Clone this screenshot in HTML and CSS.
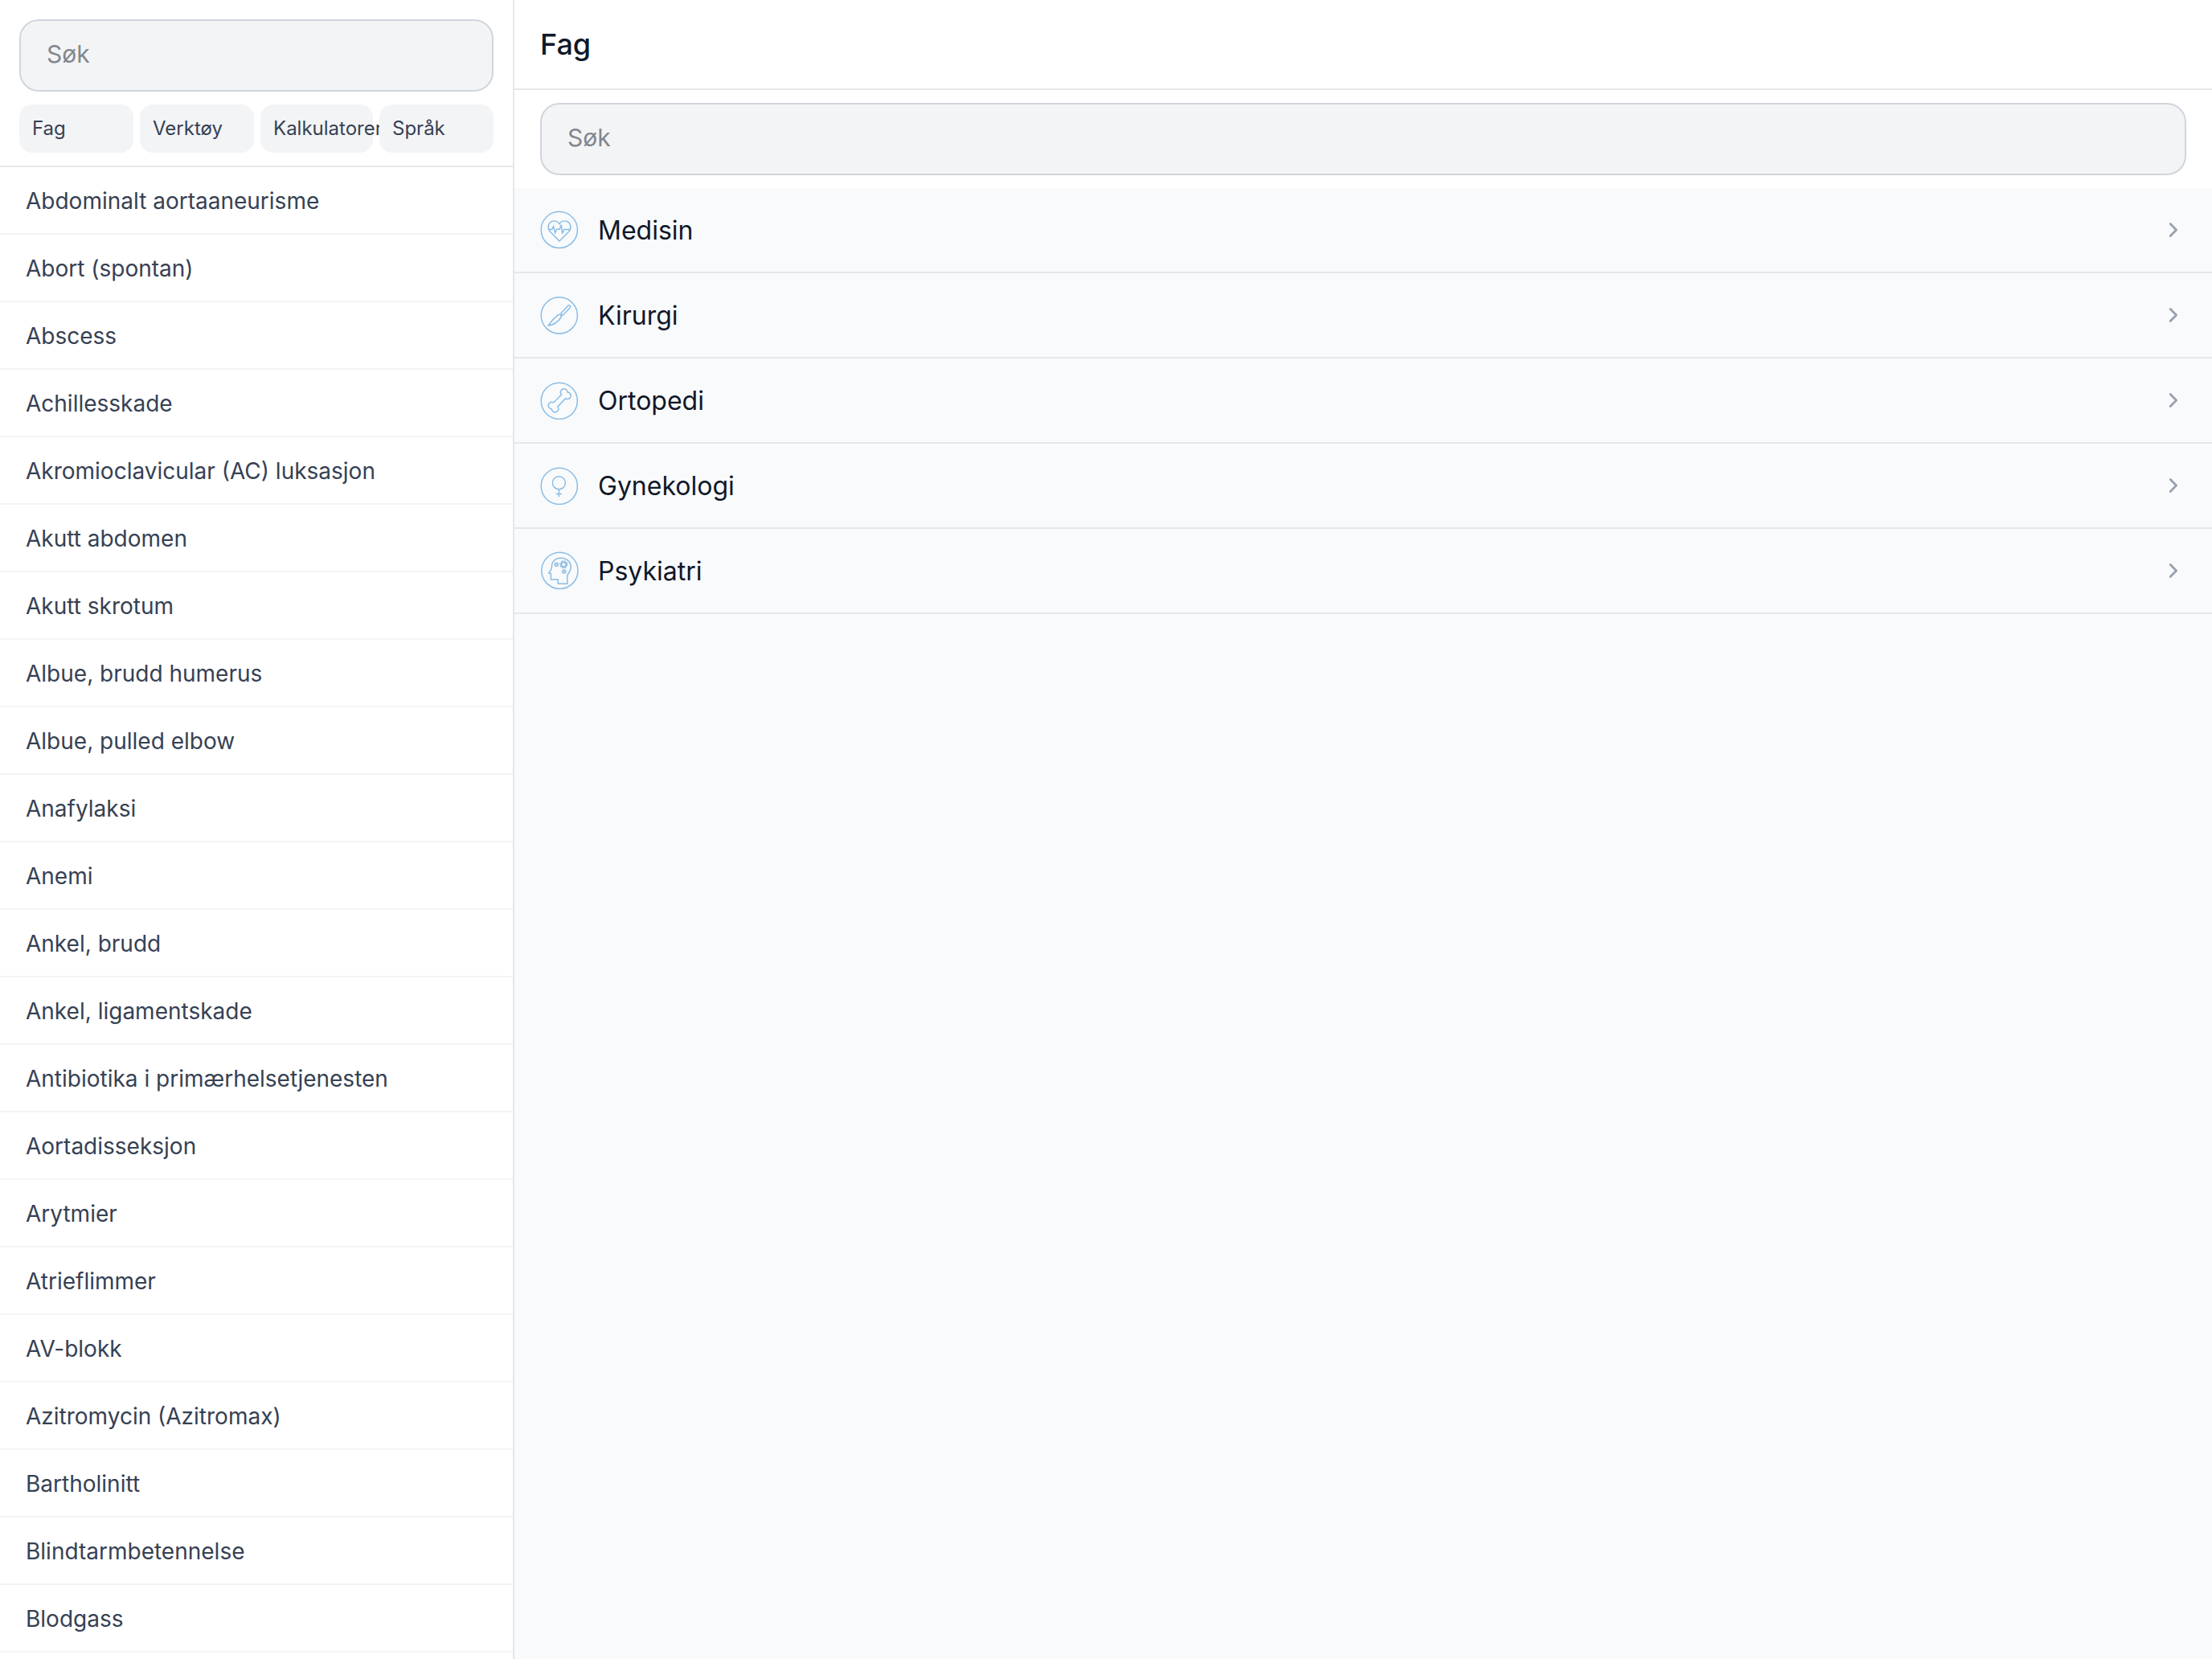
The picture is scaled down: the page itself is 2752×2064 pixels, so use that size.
FILE: index.html
```html
<!DOCTYPE html>
<html lang="no">
<head>
  <meta charset="UTF-8">
  <meta name="viewport" content="width=device-width, initial-scale=1.0">
  <title>Fag</title>
  <link rel="stylesheet" href="styles.css">
</head>
<body>
  <div class="app">
    <aside class="sidebar">
      <div class="sidebar-top">
        <input class="search" type="text" placeholder="Søk">
        <nav class="chips">
          <a class="chip">Fag</a>
          <a class="chip">Verktøy</a>
          <a class="chip">Kalkulatorer</a>
          <a class="chip">Språk</a>
        </nav>
      </div>
      <ul class="topics">
        <li>Abdominalt aortaaneurisme</li>
        <li>Abort (spontan)</li>
        <li>Abscess</li>
        <li>Achillesskade</li>
        <li>Akromioclavicular (AC) luksasjon</li>
        <li>Akutt abdomen</li>
        <li>Akutt skrotum</li>
        <li>Albue, brudd humerus</li>
        <li>Albue, pulled elbow</li>
        <li>Anafylaksi</li>
        <li>Anemi</li>
        <li>Ankel, brudd</li>
        <li>Ankel, ligamentskade</li>
        <li>Antibiotika i primærhelsetjenesten</li>
        <li>Aortadisseksjon</li>
        <li>Arytmier</li>
        <li>Atrieflimmer</li>
        <li>AV-blokk</li>
        <li>Azitromycin (Azitromax)</li>
        <li>Bartholinitt</li>
        <li>Blindtarmbetennelse</li>
        <li>Blodgass</li>
      </ul>
    </aside>

    <main class="content">
      <header class="content-header">
        <h1>Fag</h1>
      </header>
      <div class="content-search">
        <input class="search" type="text" placeholder="Søk">
      </div>
      <div class="subjects">
        <a class="subject">
          <svg class="icon" viewBox="0 0 48 48">
            <circle cx="23.8" cy="23.9" r="22.6"/>
            <path d="M24 38 L12.4 26.2 C8.6 22 9.9 15.7 13.8 13.8 C17.6 12.1 21.8 13.1 24 16.6 C26.2 13.1 30.4 12.1 34.2 13.8 C38.1 15.7 39.4 22 35.6 26.2 Z"/>
            <path d="M10.2 23.4 H14.8 L16.7 19.6 L18.7 27.7 L20.6 23.2 H24.2 L26.2 17.7 L27.7 28.6 L29.7 23.4 H37.8"/>
          </svg>
          <span>Medisin</span>
          <svg class="chevron" viewBox="0 0 12 20"><path d="M2.2 2.4 L9.6 10 L2.2 17.6"/></svg>
        </a>
        <a class="subject">
          <svg class="icon" viewBox="0 0 48 48">
            <circle cx="23.8" cy="24.4" r="22.6"/>
            <path d="M26 21.7 L34.6 12.4 Q35.8 11.2 37.1 12.3 Q38.4 13.5 37.3 14.8 L28.5 24 L26.2 23.6 Z"/>
            <path d="M10.2 36.9 C13.4 32 17.8 27.6 22.4 23.6 Q24 22.8 25.4 24 L26.6 26 C23.2 31.2 18.2 36.4 10.2 36.9 Z"/>
          </svg>
          <span>Kirurgi</span>
          <svg class="chevron" viewBox="0 0 12 20"><path d="M2.2 2.4 L9.6 10 L2.2 17.6"/></svg>
        </a>
        <a class="subject">
          <svg class="icon" viewBox="0 0 48 48">
            <circle cx="23.8" cy="24.8" r="22.6"/>
            <path d="M26.5 16.9 A4.3 4.3 0 1 1 34 13.9 A4.3 4.3 0 1 1 31.5 21.8 L21.9 31.9 A4.3 4.3 0 1 1 14.2 34.8 A4.3 4.3 0 1 1 16.8 26.9 Z"/>
          </svg>
          <span>Ortopedi</span>
          <svg class="chevron" viewBox="0 0 12 20"><path d="M2.2 2.4 L9.6 10 L2.2 17.6"/></svg>
        </a>
        <a class="subject">
          <svg class="icon" viewBox="0 0 48 48">
            <circle cx="23.8" cy="24.8" r="22.6"/>
            <circle cx="23.4" cy="20.7" r="8"/>
            <path d="M23.4 28.7 V38.2 M19.6 34.4 H27.2"/>
          </svg>
          <span>Gynekologi</span>
          <svg class="chevron" viewBox="0 0 12 20"><path d="M2.2 2.4 L9.6 10 L2.2 17.6"/></svg>
        </a>
        <a class="subject">
          <svg class="icon" viewBox="0 0 48 48">
            <circle cx="24.4" cy="23.9" r="22.6"/>
            <path d="M22.3 40.3 V35.1 H13.4 V27.6 L10.8 27 C12.6 24.6 14.4 22.6 14.4 19.4 C14.4 12.6 19 8.2 25.8 8.2 C33 8.2 38.2 12.8 38.2 19.6 C38.2 24 35.6 26.8 33.8 29.8 V40.3 Z"/>
            <circle class="gear" cx="29.3" cy="16.3" r="3.1"/>
            <circle class="teeth" cx="29.3" cy="16.3" r="4.5" stroke-dasharray="1.77 1.76"/>
            <circle cx="20.3" cy="16.4" r="1.7"/>
            <circle class="teeth small" cx="20.3" cy="16.4" r="2.5" stroke-dasharray="0.98 0.98"/>
            <circle cx="29.7" cy="25.1" r="1.7"/>
            <circle class="teeth small" cx="29.7" cy="25.1" r="2.5" stroke-dasharray="0.98 0.98"/>
          </svg>
          <span>Psykiatri</span>
          <svg class="chevron" viewBox="0 0 12 20"><path d="M2.2 2.4 L9.6 10 L2.2 17.6"/></svg>
        </a>
      </div>
    </main>
  </div>
</body>
</html>
```
FILE: styles.css
```css
* { box-sizing: border-box; }
body { margin: 0; font-family: Inter, sans-serif; background: #f9fafb; color: #101828; }
.app { display: flex; height: 2064px; overflow: hidden; }

/* sidebar */
.sidebar { width: 640px; flex-shrink: 0; background: #fff; border-right: 2px solid #e5e7eb; }
.sidebar-top { height: 208px; padding: 24px 24px 16px; border-bottom: 2px solid #e5e7eb; }
.search {
  display: block;
  width: 100%;
  height: 90px;
  padding: 0 32px 4px;
  border: 2px solid #d1d5dc;
  border-radius: 24px;
  background: #f3f4f6;
  font-family: inherit;
  font-size: 30px;
  color: #101828;
}
.search::placeholder { color: #82878f; opacity: 1; }
.chips { display: grid; grid-template-columns: 142px 142px 140px 142px; gap: 8px; margin-top: 16px; }
.chip {
  height: 60px;
  padding: 0 16px;
  border-radius: 16px;
  background: #f3f4f6;
  font-size: 24px;
  line-height: 60px;
  white-space: nowrap;
  color: #364153;
}
.topics { list-style: none; margin: 0; padding: 0; }
.topics li {
  height: 84px;
  padding: 0 32px;
  border-bottom: 2px solid #f3f4f6;
  font-size: 28px;
  line-height: 84px;
  color: #364153;
}

/* main column */
.content { flex: 1; min-width: 0; background: #f9fafb; }
.content-header { height: 112px; padding: 0 32px; display: flex; align-items: center; background: #fff; border-bottom: 2px solid #e5e7eb; }
.content-header h1 { margin: 0; font-size: 36px; font-weight: 500; line-height: 56px; }
.content-search { padding: 16px 32px; background: #fff; }
.subject {
  display: flex;
  align-items: center;
  height: 106px;
  padding: 0 42px 0 32px;
  border-bottom: 2px solid #e5e7eb;
  font-size: 32px;
  font-weight: 400;
}
.subject span { flex: 1; margin-left: 24px; }
.icon { width: 48px; height: 48px; fill: none; stroke: #8abde6; stroke-width: 1.5; }
.icon .gear { stroke-width: 2; }
.icon .teeth { stroke-width: 1.6; }
.icon .small { stroke-width: 1.1; }
.chevron { width: 12px; height: 20px; fill: none; stroke: #99a1af; stroke-width: 2.8; stroke-linecap: round; stroke-linejoin: round; }
```
